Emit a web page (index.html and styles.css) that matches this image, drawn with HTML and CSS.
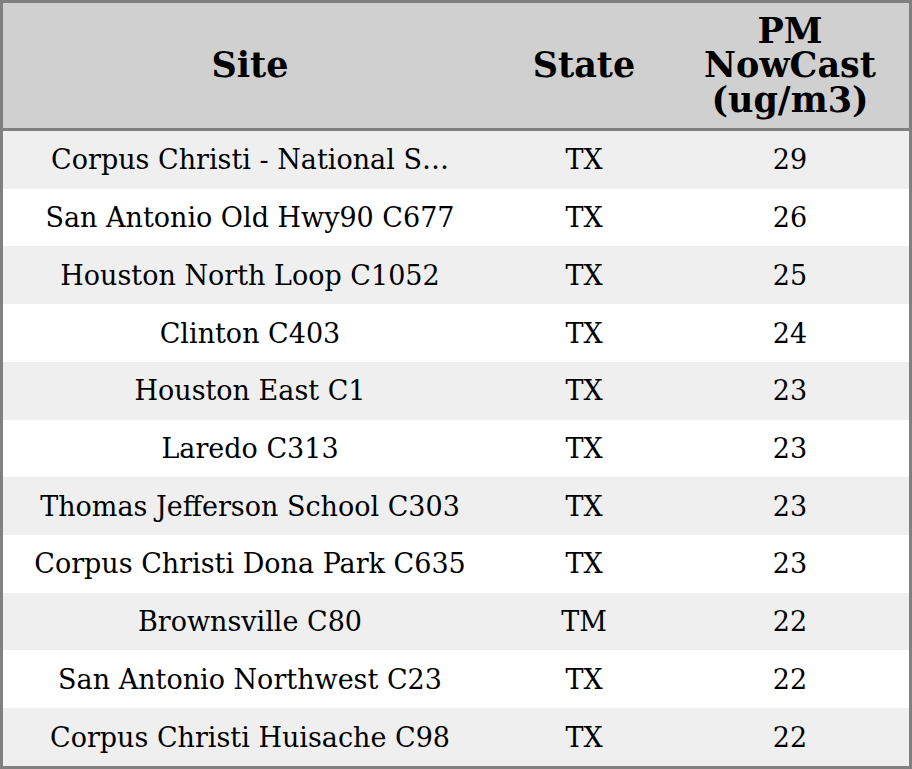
FILE: index.html
```html
<!DOCTYPE html>
<html>
<head>
<meta charset="utf-8">
<link rel="stylesheet" href="styles.css">
</head>
<body>
<table class="aq-table">
  <colgroup>
    <col class="col-site">
    <col class="col-state">
    <col class="col-pm">
  </colgroup>
  <thead>
    <tr>
      <th>Site</th>
      <th>State</th>
      <th>PM<br>NowCast<br>(ug/m3)</th>
    </tr>
  </thead>
  <tbody>
    <tr><td>Corpus Christi - National S…</td><td>TX</td><td>29</td></tr>
    <tr><td>San Antonio Old Hwy90 C677</td><td>TX</td><td>26</td></tr>
    <tr><td>Houston North Loop C1052</td><td>TX</td><td>25</td></tr>
    <tr><td>Clinton C403</td><td>TX</td><td>24</td></tr>
    <tr><td>Houston East C1</td><td>TX</td><td>23</td></tr>
    <tr><td>Laredo C313</td><td>TX</td><td>23</td></tr>
    <tr><td>Thomas Jefferson School C303</td><td>TX</td><td>23</td></tr>
    <tr><td>Corpus Christi Dona Park C635</td><td>TX</td><td>23</td></tr>
    <tr><td>Brownsville C80</td><td>TM</td><td>22</td></tr>
    <tr><td>San Antonio Northwest C23</td><td>TX</td><td>22</td></tr>
    <tr><td>Corpus Christi Huisache C98</td><td>TX</td><td>22</td></tr>
  </tbody>
</table>
</body>
</html>
```
FILE: styles.css
```css
html, body {
  margin: 0;
  padding: 0;
  background: #ffffff;
}
.aq-table {
  width: 912px;
  height: 769px;
  border-collapse: separate;
  border-spacing: 0;
  border: 3px solid #808080;
  box-sizing: border-box;
  table-layout: fixed;
  font-family: "DejaVu Serif", serif;
  color: #000;
}
.col-site { width: 494px; }
.col-state { width: 174px; }
.col-pm { width: 238px; }
.aq-table th {
  background: #d0d0d0;
  font-weight: bold;
  font-size: 35px;
  line-height: 34.5px;
  height: 125px;
  padding: 0;
  text-align: center;
  vertical-align: middle;
  border-bottom: 3px solid #808080;
}
.aq-table td {
  font-size: 27px;
  height: 57.7px;
  padding: 0;
  text-align: center;
  vertical-align: middle;
  white-space: nowrap;
  overflow: hidden;
}
.aq-table tbody tr:nth-child(odd) td { background: #efefef; }
.aq-table tbody tr:nth-child(even) td { background: #ffffff; }
```
